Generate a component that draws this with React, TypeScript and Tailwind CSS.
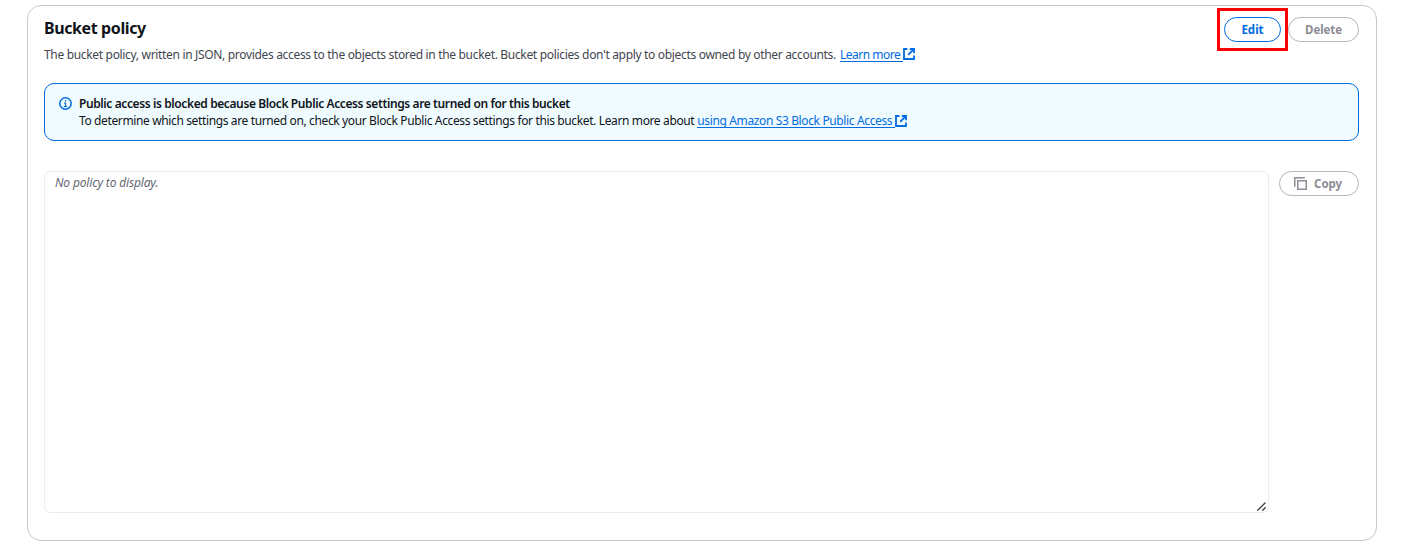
function ExternalIcon() {
  return (
    <svg className="inline-block h-3 w-3 shrink-0" viewBox="0 0 12 12" fill="none" stroke="#006ce0" strokeWidth="1.8">
      <path d="M4.4 1H1v10h10V7.6" />
      <path d="M6.8 1H11v4.2M10.8 1.2L5.2 6.8" />
    </svg>
  );
}

function InfoIcon() {
  return (
    <svg className="mt-[7px] h-[13px] w-[13px] shrink-0" viewBox="0 0 13 13" fill="none" stroke="#006ce0">
      <circle cx="6.5" cy="6.5" r="5.7" strokeWidth="1.5" />
      <path d="M6.5 3v1.5M5 6h1.5v3.5M4.8 9.5h3.4" strokeWidth="1.2" />
    </svg>
  );
}

function CopyIcon() {
  return (
    <svg className="h-[13px] w-[13px] shrink-0" viewBox="0 0 13 13" fill="none" stroke="#8c8c94" strokeWidth="1.5">
      <path d="M0.75 9.8V0.75H10.8" />
      <rect x="3.75" y="3.75" width="8.5" height="8.5" />
    </svg>
  );
}

export default function App() {
  return (
    <main className="h-[553px] w-[1408px] overflow-hidden bg-white pl-[27px] pt-[5px] font-['Noto_Sans',sans-serif] text-[12px] leading-[17px] text-[#0f141a]">
      <section className="h-[536px] w-[1350px] rounded-[14px] border border-[#c6c6cd] pl-4 pr-[17px]">
        <header className="flex h-[77px] justify-between">
          <div className="whitespace-nowrap pt-3">
            <h2 className="text-[16px] font-bold leading-5 tracking-[-0.4px]">Bucket policy</h2>
            <p className="mt-[5px] flex h-[22px] items-center text-[#424650]">
              <span className="tracking-[-0.325px]">
                The bucket policy, written in JSON, provides access to the objects stored in the bucket. Bucket policies don't apply to objects owned by other accounts.
              </span>
              <a className="ml-1 flex items-center text-[#006ce0]">
                <span className="border-b border-[#006ce0] pr-[3px] pt-px leading-[13px] tracking-[-0.5px]">Learn more</span>
                <ExternalIcon />
              </a>
            </p>
          </div>
          <div className="flex pt-[2px]">
            <div className="h-[43px] w-[71px] border-[3px] border-[#ff0000] px-1 pt-[6px]">
              <button className="h-[25px] w-[57px] rounded-full border-[1.5px] border-[#006ce0] text-[11.5px] font-bold leading-[20px] text-[#006ce0]">Edit</button>
            </div>
            <button className="mt-[9px] h-[25px] w-[71px] rounded-full border border-[#b4b4bb] text-[11.5px] font-bold leading-[20px] tracking-[-0.1px] text-[#8c8c94]">Delete</button>
          </div>
        </header>

        <div className="flex h-[58px] gap-[7px] rounded-[10px] border border-[#006ce0] bg-[#f0fbff] pl-[14px] pt-[6px]">
          <InfoIcon />
          <div className="whitespace-nowrap pt-[5px]">
            <p className="font-semibold tracking-[-0.395px]">
              <span>Public access is blocked because Block Public Access settings are turned on for this bucket</span>
            </p>
            <p className="flex items-center">
              <span className="tracking-[-0.37px]">To determine which settings are turned on, check your Block Public Access settings for this bucket. Learn more about</span>
              <a className="ml-[3px] flex items-center text-[#006ce0]">
                <span className="border-b border-[#006ce0] pr-[3px] pt-px leading-[13px] tracking-[-0.37px]">using Amazon S3 Block Public Access</span>
                <ExternalIcon />
              </a>
            </p>
          </div>
        </div>

        <div className="mt-[30px] flex items-start justify-between">
          <div className="flex h-[342px] w-[1225px] items-start justify-between rounded-[6px] border border-[#ebebf0] pl-[10px] pr-[2px] pt-[2px]">
            <em className="tracking-[-0.16px] text-[#656871]">No policy to display.</em>
            <svg className="mb-[1px] h-[9px] w-[9px] self-end" viewBox="0 0 9 9" fill="none" stroke="#44474d" strokeWidth="1.4">
              <path d="M0.3 8.7L8.5 0.5M5.3 8.7L8.7 5.3" />
            </svg>
          </div>
          <button className="flex h-[25px] w-[80px] items-center justify-center gap-[7px] rounded-full border border-[#b4b4bb] pr-[2px] text-[11.5px] font-bold text-[#8c8c94]">
            <CopyIcon />
            <span className="-mt-px tracking-[-0.1px]">Copy</span>
          </button>
        </div>
      </section>
    </main>
  );
}
